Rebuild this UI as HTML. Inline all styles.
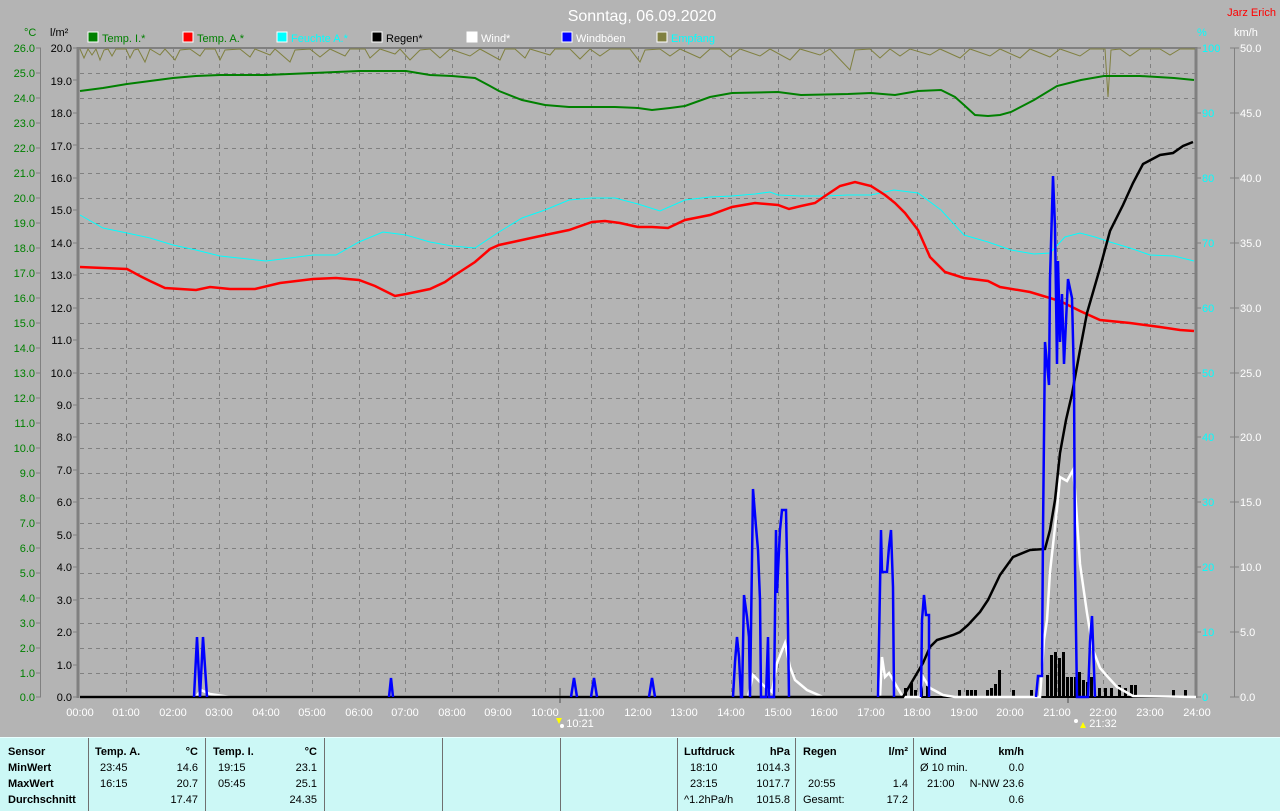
<!DOCTYPE html>
<html><head><meta charset="utf-8"><style>
body{margin:0;width:1280px;height:810px;background:#b4b4b4;overflow:hidden;font-family:"Liberation Sans",sans-serif}
svg{position:absolute;left:0;top:0}
#tbl{position:absolute;left:0;top:737px;width:1280px;height:73px;background:#ccf8f6;border-top:1px solid #e8ffff}
.c{position:absolute;top:0;height:73px;border-left:1px solid #707070}
.t{position:absolute;font-size:11px;color:#000;white-space:nowrap}
.b{font-weight:bold}
</style></head><body>
<svg width="1280" height="737" viewBox="0 0 1280 737" font-family="Liberation Sans" font-size="11">
<text x="642" y="21" fill="#fff" font-size="16" text-anchor="middle">Sonntag, 06.09.2020</text>
<text x="1276" y="16" fill="#f00" font-size="11" text-anchor="end">Jarz Erich</text>
<text x="24" y="36" fill="#008000">°C</text>
<text x="50" y="36" fill="#000">l/m²</text>
<text x="1197" y="36" fill="#0ff">%</text>
<text x="1234" y="36" fill="#fff">km/h</text>
<g>
<rect x="88" y="32" width="10" height="10" fill="#008000" stroke="#fff"/><text x="102" y="42" fill="#008000">Temp. I.*</text>
<rect x="183" y="32" width="10" height="10" fill="#f00" stroke="#fff"/><text x="197" y="42" fill="#008000">Temp. A.*</text>
<rect x="277" y="32" width="10" height="10" fill="#0ff" stroke="#fff"/><text x="291" y="42" fill="#0ff">Feuchte A.*</text>
<rect x="372" y="32" width="10" height="10" fill="#000" stroke="#fff"/><text x="386" y="42" fill="#000">Regen*</text>
<rect x="467" y="32" width="10" height="10" fill="#fff" stroke="#fff"/><text x="481" y="42" fill="#fff">Wind*</text>
<rect x="562" y="32" width="10" height="10" fill="#00f" stroke="#fff"/><text x="576" y="42" fill="#fff">Windböen</text>
<rect x="657" y="32" width="10" height="10" fill="#808040" stroke="#fff"/><text x="671" y="42" fill="#0ff">Empfang</text>
</g>
<g stroke="#808080" stroke-dasharray="4,4" stroke-width="1">
<path d="M80 73.5H1195M80 98.5H1195M80 123.5H1195M80 148.5H1195M80 173.5H1195M80 198.5H1195M80 223.5H1195M80 248.5H1195M80 273.5H1195M80 298.5H1195M80 323.5H1195M80 348.5H1195M80 373.5H1195M80 398.5H1195M80 423.5H1195M80 448.5H1195M80 473.5H1195M80 498.5H1195M80 523.5H1195M80 548.5H1195M80 573.5H1195M80 598.5H1195M80 623.5H1195M80 648.5H1195M80 673.5H1195"/>
<path d="M126.5 48V697M173.5 48V697M219.5 48V697M266.5 48V697M312.5 48V697M359.5 48V697M405.5 48V697M452.5 48V697M498.5 48V697M545.5 48V697M591.5 48V697M638.5 48V697M684.5 48V697M731.5 48V697M778.5 48V697M824.5 48V697M871.5 48V697M917.5 48V697M964.5 48V697M1010.5 48V697M1057.5 48V697M1103.5 48V697M1150.5 48V697"/>
</g>
<g stroke="#808080" fill="none">
<path d="M40.5 48V697M1234.5 48V697" stroke-width="1"/>
<path d="M78 47V698M1196 47V698" stroke-width="3"/>
<path d="M78 48H1196" stroke-width="2"/>
<path d="M36 48h5M36 73h5M36 98h5M36 123h5M36 148h5M36 173h5M36 198h5M36 223h5M36 248h5M36 273h5M36 298h5M36 323h5M36 348h5M36 373h5M36 398h5M36 423h5M36 448h5M36 473h5M36 498h5M36 523h5M36 548h5M36 573h5M36 598h5M36 623h5M36 648h5M36 673h5M36 697h5"/>
<path d="M73 48h5M73 80h5M73 113h5M73 145h5M73 178h5M73 210h5M73 243h5M73 275h5M73 308h5M73 340h5M73 373h5M73 405h5M73 437h5M73 470h5M73 502h5M73 535h5M73 567h5M73 600h5M73 632h5M73 665h5M73 697h5"/>
<path d="M1196 48h5M1196 113h5M1196 178h5M1196 243h5M1196 308h5M1196 373h5M1196 437h5M1196 502h5M1196 567h5M1196 632h5M1196 697h5"/>
<path d="M1230 48h9M1230 113h9M1230 178h9M1230 243h9M1230 308h9M1230 373h9M1230 437h9M1230 502h9M1230 567h9M1230 632h9M1230 697h9"/>
<path d="M560 688V703M1068 688V703" stroke-width="2"/>
</g>
<g fill="#008000" text-anchor="end">
<text x="35" y="52">26.0</text><text x="35" y="77">25.0</text><text x="35" y="102">24.0</text><text x="35" y="127">23.0</text><text x="35" y="152">22.0</text><text x="35" y="177">21.0</text><text x="35" y="202">20.0</text><text x="35" y="227">19.0</text><text x="35" y="252">18.0</text><text x="35" y="277">17.0</text><text x="35" y="302">16.0</text><text x="35" y="327">15.0</text><text x="35" y="352">14.0</text><text x="35" y="377">13.0</text><text x="35" y="402">12.0</text><text x="35" y="427">11.0</text><text x="35" y="452">10.0</text><text x="35" y="477">9.0</text><text x="35" y="502">8.0</text><text x="35" y="527">7.0</text><text x="35" y="552">6.0</text><text x="35" y="577">5.0</text><text x="35" y="602">4.0</text><text x="35" y="627">3.0</text><text x="35" y="652">2.0</text><text x="35" y="677">1.0</text><text x="35" y="701">0.0</text>
</g>
<g fill="#000" text-anchor="end">
<text x="72" y="52">20.0</text><text x="72" y="85">19.0</text><text x="72" y="117">18.0</text><text x="72" y="150">17.0</text><text x="72" y="182">16.0</text><text x="72" y="214">15.0</text><text x="72" y="247">14.0</text><text x="72" y="279">13.0</text><text x="72" y="312">12.0</text><text x="72" y="344">11.0</text><text x="72" y="377">10.0</text><text x="72" y="409">9.0</text><text x="72" y="441">8.0</text><text x="72" y="474">7.0</text><text x="72" y="506">6.0</text><text x="72" y="539">5.0</text><text x="72" y="571">4.0</text><text x="72" y="604">3.0</text><text x="72" y="636">2.0</text><text x="72" y="669">1.0</text><text x="72" y="701">0.0</text>
</g>
<g fill="#0ff">
<text x="1202" y="52">100</text><text x="1202" y="117">90</text><text x="1202" y="182">80</text><text x="1202" y="247">70</text><text x="1202" y="312">60</text><text x="1202" y="377">50</text><text x="1202" y="441">40</text><text x="1202" y="506">30</text><text x="1202" y="571">20</text><text x="1202" y="636">10</text><text x="1202" y="701">0</text>
</g>
<g fill="#fff">
<text x="1240" y="52">50.0</text><text x="1240" y="117">45.0</text><text x="1240" y="182">40.0</text><text x="1240" y="247">35.0</text><text x="1240" y="312">30.0</text><text x="1240" y="377">25.0</text><text x="1240" y="441">20.0</text><text x="1240" y="506">15.0</text><text x="1240" y="571">10.0</text><text x="1240" y="636">5.0</text><text x="1240" y="701">0.0</text>
</g>
<g fill="#fff" text-anchor="middle">
<text x="80" y="716">00:00</text><text x="126" y="716">01:00</text><text x="173" y="716">02:00</text><text x="219" y="716">03:00</text><text x="266" y="716">04:00</text><text x="312" y="716">05:00</text><text x="359" y="716">06:00</text><text x="405" y="716">07:00</text><text x="452" y="716">08:00</text><text x="498" y="716">09:00</text><text x="545" y="716">10:00</text><text x="591" y="716">11:00</text><text x="638" y="716">12:00</text><text x="684" y="716">13:00</text><text x="731" y="716">14:00</text><text x="778" y="716">15:00</text><text x="824" y="716">16:00</text><text x="871" y="716">17:00</text><text x="917" y="716">18:00</text><text x="964" y="716">19:00</text><text x="1010" y="716">20:00</text><text x="1057" y="716">21:00</text><text x="1103" y="716">22:00</text><text x="1150" y="716">23:00</text><text x="1197" y="716">24:00</text>
<text x="580" y="727">10:21</text><text x="1103" y="727">21:32</text>
</g>
<path d="M556 718l3 6 3-6z" fill="#ff0"/><circle cx="562" cy="726" r="2" fill="#fff"/>
<path d="M1080 728l3-6 3 6z" fill="#ff0"/><circle cx="1076" cy="721" r="2" fill="#fff"/>
<path d="M80 697H1196" stroke="#000" stroke-width="2"/>
<polyline fill="none" stroke="#808040" stroke-width="1" points="80,49 84,58 88,49 92,55 96,49 100,60 104,50 108,49 112,56 116,49 126,49 130,58 134,50 138,49 145,62 150,49 160,55 165,49 175,60 180,50 190,49 200,56 205,49 215,49 220,60 225,50 240,49 250,57 255,49 270,55 275,49 290,62 295,50 310,49 320,57 330,49 345,56 350,49 365,49 370,58 380,49 395,54 400,49 410,60 420,50 430,49 440,58 450,49 470,56 480,49 500,60 505,49 515,49 525,58 530,49 550,55 555,49 570,49 580,59 590,49 600,56 610,49 630,49 640,62 645,50 660,49 670,56 680,49 700,58 710,49 720,49 730,57 740,49 760,56 770,49 790,60 800,49 820,55 830,49 850,70 855,50 870,49 880,58 890,49 900,56 910,49 930,55 940,49 960,58 970,49 990,56 1000,49 1020,58 1030,49 1050,57 1060,49 1080,56 1090,49 1105,49 1108,97 1111,50 1120,49 1130,56 1140,49 1160,49 1170,55 1180,49 1195,49"/>
<polyline fill="none" stroke="#008000" stroke-width="2" points="80,91 103,88 127,84 150,81 173,78 196,76 220,75 266,75 313,73 359,71 406,71 430,75 452,76 475,78 490,86 499,91 522,100 545,105 569,107 615,107 638,108 652,110 670,108 685,106 710,97 732,93 778,92 801,95 848,94 871,93 895,95 918,91 941,90 955,97 964,105 975,115 988,116 1000,115 1011,112 1034,100 1057,86 1081,80 1104,76 1140,76 1174,78 1194,80"/>
<polyline fill="none" stroke="#0ff" stroke-width="1" points="80,215 103,228 127,233 150,238 173,245 196,250 220,256 266,261 290,258 313,255 336,255 359,242 383,232 406,235 430,242 452,246 475,248 499,232 522,218 545,210 569,200 592,198 615,198 638,204 660,211 685,200 710,197 732,196 755,194 770,192 778,195 801,196 825,196 848,195 871,195 894,190 918,193 941,210 964,235 988,242 1011,250 1034,254 1050,253 1065,237 1080,233 1095,237 1110,242 1130,248 1150,255 1174,256 1194,261"/>
<polyline fill="none" stroke="#f00" stroke-width="2.5" points="80,267 103,268 127,269 140,276 150,281 165,288 196,290 210,287 230,289 255,289 280,283 313,279 336,278 359,280 375,286 383,290 395,296 406,294 430,289 445,282 452,277 475,262 490,249 499,245 522,240 545,235 569,230 592,222 605,221 620,223 638,227 652,227 668,228 685,220 710,215 732,207 755,203 778,205 789,209 801,206 815,203 825,196 840,186 855,182 871,186 885,195 895,203 905,213 918,230 930,257 945,272 964,278 988,281 1000,287 1030,292 1060,301 1080,311 1100,320 1130,323 1160,327 1180,330 1194,331"/>
<g fill="#000">
<rect x="904" y="688" width="3" height="9"/><rect x="910" y="683" width="3" height="14"/><rect x="914" y="690" width="3" height="7"/><rect x="920" y="684" width="3" height="13"/><rect x="926" y="686" width="3" height="11"/><rect x="958" y="690" width="3" height="7"/><rect x="966" y="690" width="3" height="7"/><rect x="970" y="690" width="3" height="7"/><rect x="974" y="690" width="3" height="7"/><rect x="986" y="690" width="3" height="7"/><rect x="990" y="688" width="3" height="9"/><rect x="994" y="684" width="3" height="13"/><rect x="998" y="670" width="3" height="27"/><rect x="1012" y="690" width="3" height="7"/><rect x="1030" y="690" width="3" height="7"/><rect x="1046" y="675" width="3" height="22"/><rect x="1050" y="655" width="3" height="42"/><rect x="1054" y="652" width="3" height="45"/><rect x="1058" y="658" width="3" height="39"/><rect x="1062" y="652" width="3" height="45"/><rect x="1066" y="677" width="3" height="20"/><rect x="1070" y="677" width="3" height="20"/><rect x="1074" y="677" width="3" height="20"/><rect x="1078" y="672" width="3" height="25"/><rect x="1082" y="680" width="3" height="17"/><rect x="1086" y="682" width="3" height="15"/><rect x="1090" y="677" width="3" height="20"/><rect x="1098" y="688" width="3" height="9"/><rect x="1104" y="688" width="3" height="9"/><rect x="1110" y="688" width="3" height="9"/><rect x="1118" y="685" width="3" height="12"/><rect x="1124" y="688" width="3" height="9"/><rect x="1130" y="685" width="3" height="12"/><rect x="1134" y="685" width="3" height="12"/><rect x="1172" y="690" width="3" height="7"/><rect x="1184" y="690" width="3" height="7"/>
</g>
<polyline fill="none" stroke="#fff" stroke-width="2.5" points="80,697 196,697 201,690 210,694 230,697 748,697 753,675 763,685 772,692 777,663 785,643 790,667 795,680 807,690 823,697 880,697 882,657 885,677 889,673 897,687 903,697 920,697 923,677 930,688 943,695 955,697 1040,697 1044,640 1047,620 1050,572 1057,509 1060,477 1067,481 1073,470 1075,490 1080,564 1087,613 1093,650 1100,668 1107,676 1117,687 1133,696 1196,697"/>
<polyline fill="none" stroke="#000" stroke-width="2.5" points="80,697 900,697 903,697 913,680 923,663 930,647 937,640 953,635 960,632 968,625 980,612 988,600 1000,575 1013,557 1030,550 1045,549 1050,530 1055,500 1060,453 1066,420 1072,394 1080,350 1087,313 1100,268 1110,231 1123,205 1133,183 1143,164 1160,155 1173,153 1183,146 1193,142"/>
<g fill="none" stroke="#00f" stroke-width="2.5">
<polyline points="194,697 197,637 200,697 203,637 207,697"/>
<polyline points="389,697 391,678 393,697"/>
<polyline points="571,697 574,678 577,697"/>
<polyline points="591,697 594,678 597,697"/>
<polyline points="649,697 652,678 655,697"/>
<polyline points="733,697 735,662 737,637 739,657 741,697 742,697 744,595 747,617 749,637 750,697 752,560 753,489 756,527 758,550 760,600 761,697 766,697 768,637 769,697 774,697 776,530 777,593 779,550 780,530 782,510 786,510 787,560 789,697"/>
<polyline points="878,697 880,587 881,530 882,572 887,572 889,547 891,530 893,587 894,697"/>
<polyline points="921,697 922,620 924,595 926,615 929,615 929,697"/>
<polyline points="1036,697 1038,676 1042,676 1043,531 1045,342 1049,385 1050,279 1053,176 1055,227 1057,364 1058,261 1060,342 1062,294 1064,364 1068,279 1072,298 1074,379 1075,564 1077,697 1088,697 1090,642 1092,616 1095,697"/>
</g>
</svg>
<div id="tbl">
<div class="c" style="left:88px"></div><div class="c" style="left:205px"></div><div class="c" style="left:324px"></div><div class="c" style="left:442px"></div><div class="c" style="left:560px"></div><div class="c" style="left:677px"></div><div class="c" style="left:795px"></div><div class="c" style="left:913px"></div>
<div class="t b" style="left:8px;top:8px">Sensor</div><div class="t b" style="left:8px;top:24px">MinWert</div><div class="t b" style="left:8px;top:40px">MaxWert</div><div class="t b" style="left:8px;top:56px">Durchschnitt</div>
<div class="t b" style="left:95px;top:8px">Temp. A.</div><div class="t b" style="right:1082px;top:8px">°C</div>
<div class="t" style="left:100px;top:24px">23:45</div><div class="t" style="right:1082px;top:24px">14.6</div>
<div class="t" style="left:100px;top:40px">16:15</div><div class="t" style="right:1082px;top:40px">20.7</div>
<div class="t" style="right:1082px;top:56px">17.47</div>
<div class="t b" style="left:213px;top:8px">Temp. I.</div><div class="t b" style="right:963px;top:8px">°C</div>
<div class="t" style="left:218px;top:24px">19:15</div><div class="t" style="right:963px;top:24px">23.1</div>
<div class="t" style="left:218px;top:40px">05:45</div><div class="t" style="right:963px;top:40px">25.1</div>
<div class="t" style="right:963px;top:56px">24.35</div>
<div class="t b" style="left:684px;top:8px">Luftdruck</div><div class="t b" style="right:490px;top:8px">hPa</div>
<div class="t" style="left:690px;top:24px">18:10</div><div class="t" style="right:490px;top:24px">1014.3</div>
<div class="t" style="left:690px;top:40px">23:15</div><div class="t" style="right:490px;top:40px">1017.7</div>
<div class="t" style="left:684px;top:56px">^1.2hPa/h</div><div class="t" style="right:490px;top:56px">1015.8</div>
<div class="t b" style="left:803px;top:8px">Regen</div><div class="t b" style="right:372px;top:8px">l/m²</div>
<div class="t" style="left:808px;top:40px">20:55</div><div class="t" style="right:372px;top:40px">1.4</div>
<div class="t" style="left:803px;top:56px">Gesamt:</div><div class="t" style="right:372px;top:56px">17.2</div>
<div class="t b" style="left:920px;top:8px">Wind</div><div class="t b" style="right:256px;top:8px">km/h</div>
<div class="t" style="left:920px;top:24px">Ø 10 min.</div><div class="t" style="right:256px;top:24px">0.0</div>
<div class="t" style="left:927px;top:40px">21:00</div><div class="t" style="right:256px;top:40px">N-NW 23.6</div>
<div class="t" style="right:256px;top:56px">0.6</div>
</div>
</body></html>
